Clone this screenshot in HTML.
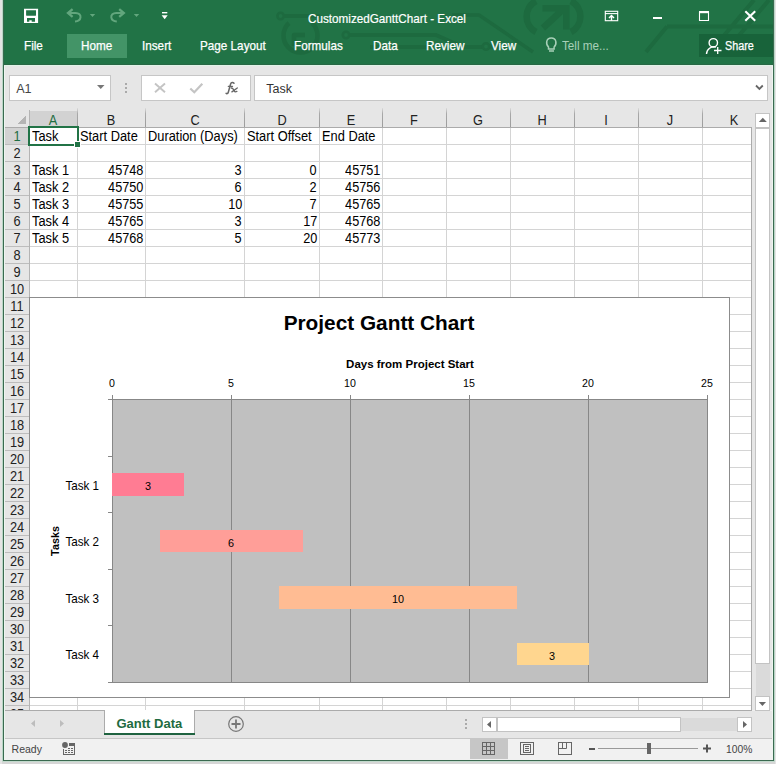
<!DOCTYPE html><html><head><meta charset="utf-8"><style>
html,body{margin:0;padding:0;}
body{width:776px;height:764px;position:relative;overflow:hidden;background:#e4e4e4;font-family:"Liberation Sans", sans-serif;}
div{box-sizing:border-box;}
svg{position:absolute;overflow:visible;}
</style></head><body>
<div style="position:absolute;left:3px;top:0px;width:771px;height:761px;background:#f0f0f0;"></div>
<div style="position:absolute;left:3px;top:0px;width:771px;height:65px;background:#217346;"></div>
<svg style="left:0;top:0" width="776" height="65" viewBox="0 0 776 65">
<g fill="none" stroke="#1d6a3f" stroke-width="4" stroke-linejoin="round">
<circle cx="280.6" cy="16" r="3.2" stroke-width="2.6"/>
<line x1="284" y1="16" x2="320" y2="16"/>
<path d="M 289 23 A 17 17 0 1 0 312 23" stroke-width="4.5"/>
<path d="M 294 46 V 35 H 305" stroke-width="4.5"/>
<circle cx="346" cy="35" r="3.2" stroke-width="2.6"/>
<path d="M 349.5 35 H 436 L 463 47 H 482"/>
<circle cx="486" cy="46.5" r="3.2" stroke-width="2.6"/>
<path d="M 489.5 46.5 H 500"/>
<path d="M 370 47 H 430"/>
<path d="M 452 15 H 479 L 533 52" stroke-width="3.5"/>
<path d="M 536 1 A 17.5 17.5 0 0 0 536 32" stroke-width="6.5"/>
<path d="M 571 1 A 17.5 17.5 0 0 1 571 32" stroke-width="6.5"/>
<path d="M 543 28 L 564 8.5 M 542.5 8.3 H 566.3 V 29.6" stroke-width="6.5" stroke-linejoin="miter"/>
<path d="M 667 26.4 H 773 M 667 26.4 L 646 52 M 754 0 L 716 45 M 769 0 L 731 45"/>
</g></svg>
<svg style="left:0;top:0" width="200" height="34" viewBox="0 0 200 34">
<path fill="#fff" fill-rule="evenodd" d="M24 8.8 H38.1 V23.1 H24 Z M26.1 10.2 V15.3 Q26.1 15.7 26.6 15.7 H35.6 Q36 15.7 36 15.3 V10.2 Z M27 18 V21.8 H29.3 V20.2 H31.7 V21.8 H35 V18 Z"/>
<g fill="none" stroke="#62a67d" stroke-width="2" stroke-linecap="butt">
<path d="M68.5 13 H75.5 C79 13 80.8 15 80.5 17.3 C80.2 19.8 78 21.3 75 21.5"/>
<path d="M72.6 9.2 L68 13 L72.6 16.8" stroke-width="2.3"/>
<g transform="translate(191.8,0) scale(-1,1)">
<path d="M68.5 13 H75.5 C79 13 80.8 15 80.5 17.3 C80.2 19.8 78 21.3 75 21.5"/>
<path d="M72.6 9.2 L68 13 L72.6 16.8" stroke-width="2.3"/>
</g></g>
<g fill="#62a67d"><path d="M89.8 14 h5.4 l-2.7 3z"/><path d="M133.8 14 h5.4 l-2.7 3z"/></g>
<g fill="#fff"><rect x="162" y="12" width="5.3" height="1.4"/><path d="M161.6 15.3 h6.1 l-3.05 4z"/></g>
</svg>
<div style="position:absolute;top:13.16px;font-size:12.8px;line-height:12.8px;color:#fff;font-weight:normal;white-space:nowrap;-webkit-text-stroke:0.2px #fff;left:308.2px;transform:scaleX(0.914);transform-origin:left center;">CustomizedGanttChart - Excel</div>
<svg style="left:0;top:0" width="776" height="34" viewBox="0 0 776 34">
<g fill="none" stroke="#fff" stroke-width="1.1">
<rect x="605.3" y="11.3" width="12.4" height="9.4"/>
<path d="M605 13.6 h13"/>
<path d="M611.5 20.8 v-5.2 M609 18 l2.5 -2.5 l2.5 2.5" stroke-width="1.4"/>
<path d="M699.5 12 v8.5 h9 v-8.5"/>
</g>
<rect x="699" y="11" width="10" height="2.2" fill="#fff"/>
<rect x="653" y="17" width="9" height="2" fill="#fff"/>
<path d="M745.3 11.3 L755.2 20.7 M755.2 11.3 L745.3 20.7" stroke="#fff" stroke-width="2.1"/>
</svg>
<div style="position:absolute;left:67px;top:34px;width:60px;height:24px;background:#439467;"></div>
<div style="position:absolute;top:40.33px;font-size:12.6px;line-height:12.6px;color:#fff;font-weight:normal;white-space:nowrap;-webkit-text-stroke:0.25px #fff;left:24.2px;transform:scaleX(0.93);transform-origin:left center;">File</div>
<div style="position:absolute;top:40.33px;font-size:12.6px;line-height:12.6px;color:#fff;font-weight:normal;white-space:nowrap;-webkit-text-stroke:0.25px #fff;left:80.5px;transform:scaleX(0.93);transform-origin:left center;">Home</div>
<div style="position:absolute;top:40.33px;font-size:12.6px;line-height:12.6px;color:#fff;font-weight:normal;white-space:nowrap;-webkit-text-stroke:0.25px #fff;left:142.2px;transform:scaleX(0.93);transform-origin:left center;">Insert</div>
<div style="position:absolute;top:40.33px;font-size:12.6px;line-height:12.6px;color:#fff;font-weight:normal;white-space:nowrap;-webkit-text-stroke:0.25px #fff;left:200.3px;transform:scaleX(0.93);transform-origin:left center;">Page Layout</div>
<div style="position:absolute;top:40.33px;font-size:12.6px;line-height:12.6px;color:#fff;font-weight:normal;white-space:nowrap;-webkit-text-stroke:0.25px #fff;left:294.2px;transform:scaleX(0.93);transform-origin:left center;">Formulas</div>
<div style="position:absolute;top:40.33px;font-size:12.6px;line-height:12.6px;color:#fff;font-weight:normal;white-space:nowrap;-webkit-text-stroke:0.25px #fff;left:372.7px;transform:scaleX(0.93);transform-origin:left center;">Data</div>
<div style="position:absolute;top:40.33px;font-size:12.6px;line-height:12.6px;color:#fff;font-weight:normal;white-space:nowrap;-webkit-text-stroke:0.25px #fff;left:425.5px;transform:scaleX(0.93);transform-origin:left center;">Review</div>
<div style="position:absolute;top:40.33px;font-size:12.6px;line-height:12.6px;color:#fff;font-weight:normal;white-space:nowrap;-webkit-text-stroke:0.25px #fff;left:491.3px;transform:scaleX(0.93);transform-origin:left center;">View</div>
<div style="position:absolute;top:40.03px;font-size:12.6px;line-height:12.6px;color:#a8d0b8;font-weight:normal;white-space:nowrap;left:562.2px;transform:scaleX(0.93);transform-origin:left center;">Tell me...</div>
<svg style="left:0;top:30" width="600" height="30" viewBox="0 30 600 30">
<g fill="none" stroke="#a8d0b8" stroke-width="1.5">
<path d="M548.5 47 c-3 -3 -2.5 -9 2.8 -9 c5.3 0 5.8 6 2.8 9 v2 h-5.6 z"/>
<path d="M549 51 h5"/>
</g></svg>
<div style="position:absolute;left:699px;top:34px;width:74px;height:23px;background:#18633a;"></div>
<div style="position:absolute;top:39.64px;font-size:12px;line-height:12px;color:#fff;font-weight:normal;white-space:nowrap;-webkit-text-stroke:0.25px #fff;left:725.3px;transform:scaleX(0.9);transform-origin:left center;">Share</div>
<svg style="left:0;top:30" width="776" height="30" viewBox="0 30 776 30">
<g fill="none" stroke="#fff" stroke-width="1.4">
<circle cx="713.3" cy="42.8" r="4.2"/>
<path d="M706.5 54 a7.5 7.5 0 0 1 9.5 -7"/>
<path d="M714 50.5 h7.5 M717.7 47 v7" stroke-width="1.3"/>
</g></svg>
<div style="position:absolute;left:4px;top:64px;width:769px;height:1px;background:#296745;"></div>
<div style="position:absolute;left:4px;top:65px;width:769px;height:1px;background:#e0f3e7;"></div>
<div style="position:absolute;left:4px;top:66px;width:769px;height:44px;background:#e6e6e6;"></div>
<div style="position:absolute;left:9px;top:75px;width:102px;height:26px;background:#fff;border:1px solid #c6c6c6;"></div>
<div style="position:absolute;top:83.13px;font-size:12.6px;line-height:12.6px;color:#444;font-weight:normal;white-space:nowrap;left:16.2px;">A1</div>
<div style="position:absolute;left:141px;top:75px;width:110px;height:26px;background:#fff;border:1px solid #c6c6c6;"></div>
<svg style="left:0;top:0" width="776" height="110" viewBox="0 0 776 110"><g fill="none" stroke="#666" stroke-linecap="round"><path d="M234 83.2 c-0.8 -1 -2.8 -1.2 -3.4 0.8 l-2.3 8.3 c-0.4 1.4 -1.6 1.8 -2.2 1" stroke-width="1.5"/><path d="M228.3 86.3 h4.2" stroke-width="1.3"/><path d="M231.2 88 c1.2 -0.2 1.8 0.6 2.3 1.6 l0.8 1.6 c0.5 0.8 1.3 0.8 2.6 0.2 M237.3 88 l-5.4 3.9" stroke-width="1.3"/></g></svg>
<div style="position:absolute;left:254px;top:75px;width:514px;height:26px;background:#fff;border:1px solid #c6c6c6;"></div>
<svg style="left:0;top:0" width="776" height="110" viewBox="0 0 776 110"><path d="M97 85 h7.5 l-3.75 4z" fill="#777"/><g fill="#aaa"><rect x="125" y="83" width="2" height="2"/><rect x="125" y="87" width="2" height="2"/><rect x="125" y="91" width="2" height="2"/></g><path d="M155 83.5 L165 92.3 M165 83.5 L155 92.3" stroke="#c4c4c4" stroke-width="1.9" fill="none"/><path d="M190.3 88.5 L194.3 92.3 L202.3 83.7" stroke="#c4c4c4" stroke-width="2.2" fill="none"/><path d="M756 85.5 l3.4 3.4 l3.4 -3.4" stroke="#666" stroke-width="1.8" fill="none"/></svg>
<div style="position:absolute;top:82.92px;font-size:12.5px;line-height:12.5px;color:#333;font-weight:normal;white-space:nowrap;left:266.3px;">Task</div>
<div style="position:absolute;left:4px;top:110px;width:769px;height:600px;background:#e6e6e6;"></div>
<div style="position:absolute;left:29px;top:128px;width:722px;height:582px;background:#fff;"></div>
<div style="position:absolute;left:4px;top:110px;width:750px;height:17px;background:#e6e6e6;"></div>
<div style="position:absolute;left:30px;top:111px;width:47px;height:16px;background:#d2d2d2;"></div>
<div style="position:absolute;left:4px;top:128px;width:25px;height:582px;background:#e6e6e6;"></div>
<div style="position:absolute;left:4px;top:128px;width:25px;height:16px;background:#d2d2d2;"></div>
<svg style="left:0;top:0" width="776" height="764" viewBox="0 0 776 764" shape-rendering="crispEdges"><defs><linearGradient id="hsep" x1="0" y1="0" x2="0" y2="1"><stop offset="0" stop-color="#dcdcdc"/><stop offset="0.3" stop-color="#a8a8a8"/><stop offset="1" stop-color="#9c9c9c"/></linearGradient></defs><rect x="77" y="128" width="1" height="582" fill="#d4d4d4"/><rect x="145" y="128" width="1" height="582" fill="#d4d4d4"/><rect x="244" y="128" width="1" height="582" fill="#d4d4d4"/><rect x="319" y="128" width="1" height="582" fill="#d4d4d4"/><rect x="382" y="128" width="1" height="582" fill="#d4d4d4"/><rect x="446" y="128" width="1" height="582" fill="#d4d4d4"/><rect x="510" y="128" width="1" height="582" fill="#d4d4d4"/><rect x="574" y="128" width="1" height="582" fill="#d4d4d4"/><rect x="638" y="128" width="1" height="582" fill="#d4d4d4"/><rect x="702" y="128" width="1" height="582" fill="#d4d4d4"/><rect x="30" y="144" width="721" height="1" fill="#d4d4d4"/><rect x="30" y="161" width="721" height="1" fill="#d4d4d4"/><rect x="30" y="178" width="721" height="1" fill="#d4d4d4"/><rect x="30" y="195" width="721" height="1" fill="#d4d4d4"/><rect x="30" y="212" width="721" height="1" fill="#d4d4d4"/><rect x="30" y="229" width="721" height="1" fill="#d4d4d4"/><rect x="30" y="246" width="721" height="1" fill="#d4d4d4"/><rect x="30" y="263" width="721" height="1" fill="#d4d4d4"/><rect x="30" y="280" width="721" height="1" fill="#d4d4d4"/><rect x="30" y="297" width="721" height="1" fill="#d4d4d4"/><rect x="30" y="314" width="721" height="1" fill="#d4d4d4"/><rect x="30" y="331" width="721" height="1" fill="#d4d4d4"/><rect x="30" y="348" width="721" height="1" fill="#d4d4d4"/><rect x="30" y="365" width="721" height="1" fill="#d4d4d4"/><rect x="30" y="382" width="721" height="1" fill="#d4d4d4"/><rect x="30" y="399" width="721" height="1" fill="#d4d4d4"/><rect x="30" y="416" width="721" height="1" fill="#d4d4d4"/><rect x="30" y="433" width="721" height="1" fill="#d4d4d4"/><rect x="30" y="450" width="721" height="1" fill="#d4d4d4"/><rect x="30" y="467" width="721" height="1" fill="#d4d4d4"/><rect x="30" y="484" width="721" height="1" fill="#d4d4d4"/><rect x="30" y="501" width="721" height="1" fill="#d4d4d4"/><rect x="30" y="518" width="721" height="1" fill="#d4d4d4"/><rect x="30" y="535" width="721" height="1" fill="#d4d4d4"/><rect x="30" y="552" width="721" height="1" fill="#d4d4d4"/><rect x="30" y="569" width="721" height="1" fill="#d4d4d4"/><rect x="30" y="586" width="721" height="1" fill="#d4d4d4"/><rect x="30" y="603" width="721" height="1" fill="#d4d4d4"/><rect x="30" y="620" width="721" height="1" fill="#d4d4d4"/><rect x="30" y="637" width="721" height="1" fill="#d4d4d4"/><rect x="30" y="654" width="721" height="1" fill="#d4d4d4"/><rect x="30" y="671" width="721" height="1" fill="#d4d4d4"/><rect x="30" y="688" width="721" height="1" fill="#d4d4d4"/><rect x="30" y="705" width="721" height="1" fill="#d4d4d4"/><rect x="77" y="108" width="1" height="19" fill="url(#hsep)"/><rect x="145" y="108" width="1" height="19" fill="url(#hsep)"/><rect x="244" y="108" width="1" height="19" fill="url(#hsep)"/><rect x="319" y="108" width="1" height="19" fill="url(#hsep)"/><rect x="382" y="108" width="1" height="19" fill="url(#hsep)"/><rect x="446" y="108" width="1" height="19" fill="url(#hsep)"/><rect x="510" y="108" width="1" height="19" fill="url(#hsep)"/><rect x="574" y="108" width="1" height="19" fill="url(#hsep)"/><rect x="638" y="108" width="1" height="19" fill="url(#hsep)"/><rect x="702" y="108" width="1" height="19" fill="url(#hsep)"/><rect x="4" y="127" width="748" height="1" fill="#ababab"/><rect x="4" y="144" width="25" height="1" fill="#bdbdbd"/><rect x="4" y="161" width="25" height="1" fill="#bdbdbd"/><rect x="4" y="178" width="25" height="1" fill="#bdbdbd"/><rect x="4" y="195" width="25" height="1" fill="#bdbdbd"/><rect x="4" y="212" width="25" height="1" fill="#bdbdbd"/><rect x="4" y="229" width="25" height="1" fill="#bdbdbd"/><rect x="4" y="246" width="25" height="1" fill="#bdbdbd"/><rect x="4" y="263" width="25" height="1" fill="#bdbdbd"/><rect x="4" y="280" width="25" height="1" fill="#bdbdbd"/><rect x="4" y="297" width="25" height="1" fill="#bdbdbd"/><rect x="4" y="314" width="25" height="1" fill="#bdbdbd"/><rect x="4" y="331" width="25" height="1" fill="#bdbdbd"/><rect x="4" y="348" width="25" height="1" fill="#bdbdbd"/><rect x="4" y="365" width="25" height="1" fill="#bdbdbd"/><rect x="4" y="382" width="25" height="1" fill="#bdbdbd"/><rect x="4" y="399" width="25" height="1" fill="#bdbdbd"/><rect x="4" y="416" width="25" height="1" fill="#bdbdbd"/><rect x="4" y="433" width="25" height="1" fill="#bdbdbd"/><rect x="4" y="450" width="25" height="1" fill="#bdbdbd"/><rect x="4" y="467" width="25" height="1" fill="#bdbdbd"/><rect x="4" y="484" width="25" height="1" fill="#bdbdbd"/><rect x="4" y="501" width="25" height="1" fill="#bdbdbd"/><rect x="4" y="518" width="25" height="1" fill="#bdbdbd"/><rect x="4" y="535" width="25" height="1" fill="#bdbdbd"/><rect x="4" y="552" width="25" height="1" fill="#bdbdbd"/><rect x="4" y="569" width="25" height="1" fill="#bdbdbd"/><rect x="4" y="586" width="25" height="1" fill="#bdbdbd"/><rect x="4" y="603" width="25" height="1" fill="#bdbdbd"/><rect x="4" y="620" width="25" height="1" fill="#bdbdbd"/><rect x="4" y="637" width="25" height="1" fill="#bdbdbd"/><rect x="4" y="654" width="25" height="1" fill="#bdbdbd"/><rect x="4" y="671" width="25" height="1" fill="#bdbdbd"/><rect x="4" y="688" width="25" height="1" fill="#bdbdbd"/><rect x="4" y="705" width="25" height="1" fill="#bdbdbd"/><rect x="29" y="110" width="1" height="600" fill="#b4b4b4"/><rect x="751" y="127" width="1" height="583" fill="#ababab"/><path d="M17 124 L26 124 L26 115 Z" fill="#b4b4b4"/></svg>
<div style="position:absolute;top:112.88px;font-size:14.2px;line-height:14.2px;color:#1f6e42;font-weight:normal;white-space:nowrap;left:-247.0px;width:600px;text-align:center;transform:scaleX(0.9);transform-origin:center center;">A</div>
<div style="position:absolute;top:112.88px;font-size:14.2px;line-height:14.2px;color:#222;font-weight:normal;white-space:nowrap;left:-189.0px;width:600px;text-align:center;transform:scaleX(0.9);transform-origin:center center;">B</div>
<div style="position:absolute;top:112.88px;font-size:14.2px;line-height:14.2px;color:#222;font-weight:normal;white-space:nowrap;left:-105.5px;width:600px;text-align:center;transform:scaleX(0.9);transform-origin:center center;">C</div>
<div style="position:absolute;top:112.88px;font-size:14.2px;line-height:14.2px;color:#222;font-weight:normal;white-space:nowrap;left:-18.5px;width:600px;text-align:center;transform:scaleX(0.9);transform-origin:center center;">D</div>
<div style="position:absolute;top:112.88px;font-size:14.2px;line-height:14.2px;color:#222;font-weight:normal;white-space:nowrap;left:50.5px;width:600px;text-align:center;transform:scaleX(0.9);transform-origin:center center;">E</div>
<div style="position:absolute;top:112.88px;font-size:14.2px;line-height:14.2px;color:#222;font-weight:normal;white-space:nowrap;left:114.0px;width:600px;text-align:center;transform:scaleX(0.9);transform-origin:center center;">F</div>
<div style="position:absolute;top:112.88px;font-size:14.2px;line-height:14.2px;color:#222;font-weight:normal;white-space:nowrap;left:178.0px;width:600px;text-align:center;transform:scaleX(0.9);transform-origin:center center;">G</div>
<div style="position:absolute;top:112.88px;font-size:14.2px;line-height:14.2px;color:#222;font-weight:normal;white-space:nowrap;left:242.0px;width:600px;text-align:center;transform:scaleX(0.9);transform-origin:center center;">H</div>
<div style="position:absolute;top:112.88px;font-size:14.2px;line-height:14.2px;color:#222;font-weight:normal;white-space:nowrap;left:306.0px;width:600px;text-align:center;transform:scaleX(0.9);transform-origin:center center;">I</div>
<div style="position:absolute;top:112.88px;font-size:14.2px;line-height:14.2px;color:#222;font-weight:normal;white-space:nowrap;left:370.0px;width:600px;text-align:center;transform:scaleX(0.9);transform-origin:center center;">J</div>
<div style="position:absolute;top:112.88px;font-size:14.2px;line-height:14.2px;color:#222;font-weight:normal;white-space:nowrap;left:434.0px;width:600px;text-align:center;transform:scaleX(0.9);transform-origin:center center;">K</div>
<div style="position:absolute;top:129.08px;font-size:14.2px;line-height:14.2px;color:#1f6e42;font-weight:normal;white-space:nowrap;left:-283.5px;width:600px;text-align:center;transform:scaleX(0.9);transform-origin:center center;">1</div>
<div style="position:absolute;top:146.08px;font-size:14.2px;line-height:14.2px;color:#222;font-weight:normal;white-space:nowrap;left:-283.5px;width:600px;text-align:center;transform:scaleX(0.9);transform-origin:center center;">2</div>
<div style="position:absolute;top:163.08px;font-size:14.2px;line-height:14.2px;color:#222;font-weight:normal;white-space:nowrap;left:-283.5px;width:600px;text-align:center;transform:scaleX(0.9);transform-origin:center center;">3</div>
<div style="position:absolute;top:180.08px;font-size:14.2px;line-height:14.2px;color:#222;font-weight:normal;white-space:nowrap;left:-283.5px;width:600px;text-align:center;transform:scaleX(0.9);transform-origin:center center;">4</div>
<div style="position:absolute;top:197.08px;font-size:14.2px;line-height:14.2px;color:#222;font-weight:normal;white-space:nowrap;left:-283.5px;width:600px;text-align:center;transform:scaleX(0.9);transform-origin:center center;">5</div>
<div style="position:absolute;top:214.08px;font-size:14.2px;line-height:14.2px;color:#222;font-weight:normal;white-space:nowrap;left:-283.5px;width:600px;text-align:center;transform:scaleX(0.9);transform-origin:center center;">6</div>
<div style="position:absolute;top:231.08px;font-size:14.2px;line-height:14.2px;color:#222;font-weight:normal;white-space:nowrap;left:-283.5px;width:600px;text-align:center;transform:scaleX(0.9);transform-origin:center center;">7</div>
<div style="position:absolute;top:248.08px;font-size:14.2px;line-height:14.2px;color:#222;font-weight:normal;white-space:nowrap;left:-283.5px;width:600px;text-align:center;transform:scaleX(0.9);transform-origin:center center;">8</div>
<div style="position:absolute;top:265.08px;font-size:14.2px;line-height:14.2px;color:#222;font-weight:normal;white-space:nowrap;left:-283.5px;width:600px;text-align:center;transform:scaleX(0.9);transform-origin:center center;">9</div>
<div style="position:absolute;top:282.08px;font-size:14.2px;line-height:14.2px;color:#222;font-weight:normal;white-space:nowrap;left:-283.5px;width:600px;text-align:center;transform:scaleX(0.9);transform-origin:center center;">10</div>
<div style="position:absolute;top:299.08px;font-size:14.2px;line-height:14.2px;color:#222;font-weight:normal;white-space:nowrap;left:-283.5px;width:600px;text-align:center;transform:scaleX(0.9);transform-origin:center center;">11</div>
<div style="position:absolute;top:316.08px;font-size:14.2px;line-height:14.2px;color:#222;font-weight:normal;white-space:nowrap;left:-283.5px;width:600px;text-align:center;transform:scaleX(0.9);transform-origin:center center;">12</div>
<div style="position:absolute;top:333.08px;font-size:14.2px;line-height:14.2px;color:#222;font-weight:normal;white-space:nowrap;left:-283.5px;width:600px;text-align:center;transform:scaleX(0.9);transform-origin:center center;">13</div>
<div style="position:absolute;top:350.08px;font-size:14.2px;line-height:14.2px;color:#222;font-weight:normal;white-space:nowrap;left:-283.5px;width:600px;text-align:center;transform:scaleX(0.9);transform-origin:center center;">14</div>
<div style="position:absolute;top:367.08px;font-size:14.2px;line-height:14.2px;color:#222;font-weight:normal;white-space:nowrap;left:-283.5px;width:600px;text-align:center;transform:scaleX(0.9);transform-origin:center center;">15</div>
<div style="position:absolute;top:384.08px;font-size:14.2px;line-height:14.2px;color:#222;font-weight:normal;white-space:nowrap;left:-283.5px;width:600px;text-align:center;transform:scaleX(0.9);transform-origin:center center;">16</div>
<div style="position:absolute;top:401.08px;font-size:14.2px;line-height:14.2px;color:#222;font-weight:normal;white-space:nowrap;left:-283.5px;width:600px;text-align:center;transform:scaleX(0.9);transform-origin:center center;">17</div>
<div style="position:absolute;top:418.08px;font-size:14.2px;line-height:14.2px;color:#222;font-weight:normal;white-space:nowrap;left:-283.5px;width:600px;text-align:center;transform:scaleX(0.9);transform-origin:center center;">18</div>
<div style="position:absolute;top:435.08px;font-size:14.2px;line-height:14.2px;color:#222;font-weight:normal;white-space:nowrap;left:-283.5px;width:600px;text-align:center;transform:scaleX(0.9);transform-origin:center center;">19</div>
<div style="position:absolute;top:452.08px;font-size:14.2px;line-height:14.2px;color:#222;font-weight:normal;white-space:nowrap;left:-283.5px;width:600px;text-align:center;transform:scaleX(0.9);transform-origin:center center;">20</div>
<div style="position:absolute;top:469.08px;font-size:14.2px;line-height:14.2px;color:#222;font-weight:normal;white-space:nowrap;left:-283.5px;width:600px;text-align:center;transform:scaleX(0.9);transform-origin:center center;">21</div>
<div style="position:absolute;top:486.08px;font-size:14.2px;line-height:14.2px;color:#222;font-weight:normal;white-space:nowrap;left:-283.5px;width:600px;text-align:center;transform:scaleX(0.9);transform-origin:center center;">22</div>
<div style="position:absolute;top:503.08px;font-size:14.2px;line-height:14.2px;color:#222;font-weight:normal;white-space:nowrap;left:-283.5px;width:600px;text-align:center;transform:scaleX(0.9);transform-origin:center center;">23</div>
<div style="position:absolute;top:520.08px;font-size:14.2px;line-height:14.2px;color:#222;font-weight:normal;white-space:nowrap;left:-283.5px;width:600px;text-align:center;transform:scaleX(0.9);transform-origin:center center;">24</div>
<div style="position:absolute;top:537.08px;font-size:14.2px;line-height:14.2px;color:#222;font-weight:normal;white-space:nowrap;left:-283.5px;width:600px;text-align:center;transform:scaleX(0.9);transform-origin:center center;">25</div>
<div style="position:absolute;top:554.08px;font-size:14.2px;line-height:14.2px;color:#222;font-weight:normal;white-space:nowrap;left:-283.5px;width:600px;text-align:center;transform:scaleX(0.9);transform-origin:center center;">26</div>
<div style="position:absolute;top:571.08px;font-size:14.2px;line-height:14.2px;color:#222;font-weight:normal;white-space:nowrap;left:-283.5px;width:600px;text-align:center;transform:scaleX(0.9);transform-origin:center center;">27</div>
<div style="position:absolute;top:588.08px;font-size:14.2px;line-height:14.2px;color:#222;font-weight:normal;white-space:nowrap;left:-283.5px;width:600px;text-align:center;transform:scaleX(0.9);transform-origin:center center;">28</div>
<div style="position:absolute;top:605.08px;font-size:14.2px;line-height:14.2px;color:#222;font-weight:normal;white-space:nowrap;left:-283.5px;width:600px;text-align:center;transform:scaleX(0.9);transform-origin:center center;">29</div>
<div style="position:absolute;top:622.08px;font-size:14.2px;line-height:14.2px;color:#222;font-weight:normal;white-space:nowrap;left:-283.5px;width:600px;text-align:center;transform:scaleX(0.9);transform-origin:center center;">30</div>
<div style="position:absolute;top:639.08px;font-size:14.2px;line-height:14.2px;color:#222;font-weight:normal;white-space:nowrap;left:-283.5px;width:600px;text-align:center;transform:scaleX(0.9);transform-origin:center center;">31</div>
<div style="position:absolute;top:656.08px;font-size:14.2px;line-height:14.2px;color:#222;font-weight:normal;white-space:nowrap;left:-283.5px;width:600px;text-align:center;transform:scaleX(0.9);transform-origin:center center;">32</div>
<div style="position:absolute;top:673.08px;font-size:14.2px;line-height:14.2px;color:#222;font-weight:normal;white-space:nowrap;left:-283.5px;width:600px;text-align:center;transform:scaleX(0.9);transform-origin:center center;">33</div>
<div style="position:absolute;top:690.08px;font-size:14.2px;line-height:14.2px;color:#222;font-weight:normal;white-space:nowrap;left:-283.5px;width:600px;text-align:center;transform:scaleX(0.9);transform-origin:center center;">34</div>
<div style="position:absolute;top:707.08px;font-size:14.2px;line-height:14.2px;color:#222;font-weight:normal;white-space:nowrap;left:-283.5px;width:600px;text-align:center;transform:scaleX(0.9);transform-origin:center center;">35</div>
<div style="position:absolute;top:129.72px;font-size:13.8px;line-height:13.8px;color:#000;font-weight:normal;white-space:nowrap;left:32px;transform:scaleX(0.93);transform-origin:left center;">Task</div>
<div style="position:absolute;top:129.72px;font-size:13.8px;line-height:13.8px;color:#000;font-weight:normal;white-space:nowrap;left:80px;transform:scaleX(0.93);transform-origin:left center;">Start Date</div>
<div style="position:absolute;top:129.72px;font-size:13.8px;line-height:13.8px;color:#000;font-weight:normal;white-space:nowrap;left:148px;transform:scaleX(0.93);transform-origin:left center;">Duration (Days)</div>
<div style="position:absolute;top:129.72px;font-size:13.8px;line-height:13.8px;color:#000;font-weight:normal;white-space:nowrap;left:247px;transform:scaleX(0.93);transform-origin:left center;">Start Offset</div>
<div style="position:absolute;top:129.72px;font-size:13.8px;line-height:13.8px;color:#000;font-weight:normal;white-space:nowrap;left:322px;transform:scaleX(0.93);transform-origin:left center;">End Date</div>
<div style="position:absolute;top:163.72px;font-size:13.8px;line-height:13.8px;color:#000;font-weight:normal;white-space:nowrap;left:32px;transform:scaleX(0.93);transform-origin:left center;">Task 1</div>
<div style="position:absolute;top:163.72px;font-size:13.8px;line-height:13.8px;color:#000;font-weight:normal;white-space:nowrap;right:633px;transform:scaleX(0.92);transform-origin:right center;">45748</div>
<div style="position:absolute;top:163.72px;font-size:13.8px;line-height:13.8px;color:#000;font-weight:normal;white-space:nowrap;right:534px;transform:scaleX(0.92);transform-origin:right center;">3</div>
<div style="position:absolute;top:163.72px;font-size:13.8px;line-height:13.8px;color:#000;font-weight:normal;white-space:nowrap;right:459px;transform:scaleX(0.92);transform-origin:right center;">0</div>
<div style="position:absolute;top:163.72px;font-size:13.8px;line-height:13.8px;color:#000;font-weight:normal;white-space:nowrap;right:396px;transform:scaleX(0.92);transform-origin:right center;">45751</div>
<div style="position:absolute;top:180.72px;font-size:13.8px;line-height:13.8px;color:#000;font-weight:normal;white-space:nowrap;left:32px;transform:scaleX(0.93);transform-origin:left center;">Task 2</div>
<div style="position:absolute;top:180.72px;font-size:13.8px;line-height:13.8px;color:#000;font-weight:normal;white-space:nowrap;right:633px;transform:scaleX(0.92);transform-origin:right center;">45750</div>
<div style="position:absolute;top:180.72px;font-size:13.8px;line-height:13.8px;color:#000;font-weight:normal;white-space:nowrap;right:534px;transform:scaleX(0.92);transform-origin:right center;">6</div>
<div style="position:absolute;top:180.72px;font-size:13.8px;line-height:13.8px;color:#000;font-weight:normal;white-space:nowrap;right:459px;transform:scaleX(0.92);transform-origin:right center;">2</div>
<div style="position:absolute;top:180.72px;font-size:13.8px;line-height:13.8px;color:#000;font-weight:normal;white-space:nowrap;right:396px;transform:scaleX(0.92);transform-origin:right center;">45756</div>
<div style="position:absolute;top:197.72px;font-size:13.8px;line-height:13.8px;color:#000;font-weight:normal;white-space:nowrap;left:32px;transform:scaleX(0.93);transform-origin:left center;">Task 3</div>
<div style="position:absolute;top:197.72px;font-size:13.8px;line-height:13.8px;color:#000;font-weight:normal;white-space:nowrap;right:633px;transform:scaleX(0.92);transform-origin:right center;">45755</div>
<div style="position:absolute;top:197.72px;font-size:13.8px;line-height:13.8px;color:#000;font-weight:normal;white-space:nowrap;right:534px;transform:scaleX(0.92);transform-origin:right center;">10</div>
<div style="position:absolute;top:197.72px;font-size:13.8px;line-height:13.8px;color:#000;font-weight:normal;white-space:nowrap;right:459px;transform:scaleX(0.92);transform-origin:right center;">7</div>
<div style="position:absolute;top:197.72px;font-size:13.8px;line-height:13.8px;color:#000;font-weight:normal;white-space:nowrap;right:396px;transform:scaleX(0.92);transform-origin:right center;">45765</div>
<div style="position:absolute;top:214.72px;font-size:13.8px;line-height:13.8px;color:#000;font-weight:normal;white-space:nowrap;left:32px;transform:scaleX(0.93);transform-origin:left center;">Task 4</div>
<div style="position:absolute;top:214.72px;font-size:13.8px;line-height:13.8px;color:#000;font-weight:normal;white-space:nowrap;right:633px;transform:scaleX(0.92);transform-origin:right center;">45765</div>
<div style="position:absolute;top:214.72px;font-size:13.8px;line-height:13.8px;color:#000;font-weight:normal;white-space:nowrap;right:534px;transform:scaleX(0.92);transform-origin:right center;">3</div>
<div style="position:absolute;top:214.72px;font-size:13.8px;line-height:13.8px;color:#000;font-weight:normal;white-space:nowrap;right:459px;transform:scaleX(0.92);transform-origin:right center;">17</div>
<div style="position:absolute;top:214.72px;font-size:13.8px;line-height:13.8px;color:#000;font-weight:normal;white-space:nowrap;right:396px;transform:scaleX(0.92);transform-origin:right center;">45768</div>
<div style="position:absolute;top:231.72px;font-size:13.8px;line-height:13.8px;color:#000;font-weight:normal;white-space:nowrap;left:32px;transform:scaleX(0.93);transform-origin:left center;">Task 5</div>
<div style="position:absolute;top:231.72px;font-size:13.8px;line-height:13.8px;color:#000;font-weight:normal;white-space:nowrap;right:633px;transform:scaleX(0.92);transform-origin:right center;">45768</div>
<div style="position:absolute;top:231.72px;font-size:13.8px;line-height:13.8px;color:#000;font-weight:normal;white-space:nowrap;right:534px;transform:scaleX(0.92);transform-origin:right center;">5</div>
<div style="position:absolute;top:231.72px;font-size:13.8px;line-height:13.8px;color:#000;font-weight:normal;white-space:nowrap;right:459px;transform:scaleX(0.92);transform-origin:right center;">20</div>
<div style="position:absolute;top:231.72px;font-size:13.8px;line-height:13.8px;color:#000;font-weight:normal;white-space:nowrap;right:396px;transform:scaleX(0.92);transform-origin:right center;">45773</div>
<div style="position:absolute;left:28px;top:126px;width:51px;height:20px;background:transparent;border:2px solid #217346;"></div>
<div style="position:absolute;left:74px;top:141px;width:7px;height:7px;background:#fff;"></div>
<div style="position:absolute;left:75px;top:142px;width:5px;height:5px;background:#217346;"></div>
<div style="position:absolute;left:29px;top:297px;width:701px;height:401px;background:#fff;border:1px solid #8c8c8c;"></div>
<div style="position:absolute;top:312.89px;font-size:20.8px;line-height:20.8px;color:#000;font-weight:bold;white-space:nowrap;left:79px;width:600px;text-align:center;">Project Gantt Chart</div>
<div style="position:absolute;top:358.97px;font-size:11.5px;line-height:11.5px;color:#000;font-weight:bold;white-space:nowrap;left:110px;width:600px;text-align:center;">Days from Project Start</div>
<svg style="left:0;top:0" width="776" height="764" viewBox="0 0 776 764" shape-rendering="crispEdges"><rect x="112" y="399" width="596" height="284" fill="#c0c0c0"/><rect x="112" y="395" width="1" height="288" fill="#878787"/><rect x="231" y="395" width="1" height="288" fill="#878787"/><rect x="350" y="395" width="1" height="288" fill="#878787"/><rect x="469" y="395" width="1" height="288" fill="#878787"/><rect x="588" y="395" width="1" height="288" fill="#878787"/><rect x="707" y="395" width="1" height="288" fill="#878787"/><rect x="108" y="399" width="600" height="1" fill="#878787"/><rect x="112" y="682" width="596" height="1" fill="#878787"/><rect x="108" y="399" width="4" height="1" fill="#878787"/><rect x="108" y="456" width="4" height="1" fill="#878787"/><rect x="108" y="512" width="4" height="1" fill="#878787"/><rect x="108" y="569" width="4" height="1" fill="#878787"/><rect x="108" y="625" width="4" height="1" fill="#878787"/><rect x="108" y="682" width="4" height="1" fill="#878787"/><rect x="112" y="473" width="72" height="23" fill="#ff7c93"/><rect x="160" y="530" width="143" height="22" fill="#ff9e98"/><rect x="279" y="586" width="238" height="23" fill="#ffbc93"/><rect x="517" y="643" width="72" height="22" fill="#ffd68f"/></svg>
<div style="position:absolute;top:377.51px;font-size:11.8px;line-height:11.8px;color:#000;font-weight:normal;white-space:nowrap;left:-187.6px;width:600px;text-align:center;transform:scaleX(0.9);transform-origin:center center;">0</div>
<div style="position:absolute;top:377.51px;font-size:11.8px;line-height:11.8px;color:#000;font-weight:normal;white-space:nowrap;left:-68.6px;width:600px;text-align:center;transform:scaleX(0.9);transform-origin:center center;">5</div>
<div style="position:absolute;top:377.51px;font-size:11.8px;line-height:11.8px;color:#000;font-weight:normal;white-space:nowrap;left:50.39999999999998px;width:600px;text-align:center;transform:scaleX(0.9);transform-origin:center center;">10</div>
<div style="position:absolute;top:377.51px;font-size:11.8px;line-height:11.8px;color:#000;font-weight:normal;white-space:nowrap;left:169.39999999999998px;width:600px;text-align:center;transform:scaleX(0.9);transform-origin:center center;">15</div>
<div style="position:absolute;top:377.51px;font-size:11.8px;line-height:11.8px;color:#000;font-weight:normal;white-space:nowrap;left:288.4px;width:600px;text-align:center;transform:scaleX(0.9);transform-origin:center center;">20</div>
<div style="position:absolute;top:377.51px;font-size:11.8px;line-height:11.8px;color:#000;font-weight:normal;white-space:nowrap;left:407.4px;width:600px;text-align:center;transform:scaleX(0.9);transform-origin:center center;">25</div>
<div style="position:absolute;top:480.91px;font-size:11.8px;line-height:11.8px;color:#000;font-weight:normal;white-space:nowrap;left:-152.3px;width:600px;text-align:center;transform:scaleX(0.92);transform-origin:center center;">3</div>
<div style="position:absolute;top:479.62px;font-size:12.15px;line-height:12.15px;color:#000;font-weight:normal;white-space:nowrap;right:677px;transform:scaleX(0.96);transform-origin:right center;">Task 1</div>
<div style="position:absolute;top:537.51px;font-size:11.8px;line-height:11.8px;color:#000;font-weight:normal;white-space:nowrap;left:-69.0px;width:600px;text-align:center;transform:scaleX(0.92);transform-origin:center center;">6</div>
<div style="position:absolute;top:536.22px;font-size:12.15px;line-height:12.15px;color:#000;font-weight:normal;white-space:nowrap;right:677px;transform:scaleX(0.96);transform-origin:right center;">Task 2</div>
<div style="position:absolute;top:594.11px;font-size:11.8px;line-height:11.8px;color:#000;font-weight:normal;white-space:nowrap;left:97.60000000000002px;width:600px;text-align:center;transform:scaleX(0.92);transform-origin:center center;">10</div>
<div style="position:absolute;top:592.82px;font-size:12.15px;line-height:12.15px;color:#000;font-weight:normal;white-space:nowrap;right:677px;transform:scaleX(0.96);transform-origin:right center;">Task 3</div>
<div style="position:absolute;top:650.71px;font-size:11.8px;line-height:11.8px;color:#000;font-weight:normal;white-space:nowrap;left:252.29999999999995px;width:600px;text-align:center;transform:scaleX(0.92);transform-origin:center center;">3</div>
<div style="position:absolute;top:649.42px;font-size:12.15px;line-height:12.15px;color:#000;font-weight:normal;white-space:nowrap;right:677px;transform:scaleX(0.96);transform-origin:right center;">Task 4</div>
<div style="position:absolute;left:55px;top:541px;width:0;height:0;"><div style="position:absolute;left:-50px;top:-7px;width:100px;text-align:center;transform:rotate(-90deg);font-size:10.8px;line-height:14px;font-weight:bold;">Tasks</div></div>
<div style="position:absolute;left:755px;top:113px;width:15px;height:15px;background:#fff;border:1px solid #c3c3c3;"></div>
<div style="position:absolute;left:755px;top:128px;width:15px;height:536px;background:#fff;border:1px solid #c3c3c3;"></div>
<div style="position:absolute;left:756px;top:664px;width:14px;height:32px;background:#dadada;"></div>
<div style="position:absolute;left:755px;top:696px;width:15px;height:15px;background:#fff;border:1px solid #c3c3c3;"></div>
<svg style="left:0;top:0" width="776" height="764" viewBox="0 0 776 764"><path d="M758.8 122 h8 l-4 -4.3z" fill="#666"/><path d="M758.8 702 h7.2 l-3.6 4z" fill="#666"/></svg>
<div style="position:absolute;left:4px;top:711px;width:769px;height:27px;background:#e6e6e6;"></div>
<div style="position:absolute;left:4px;top:710px;width:748px;height:1px;background:#ababab;"></div>
<div style="position:absolute;left:104px;top:710px;width:91px;height:25px;background:#fff;border-left:1px solid #ababab;border-right:1px solid #ababab;"></div>
<div style="position:absolute;left:104px;top:733px;width:91px;height:2px;background:#1f6340;"></div>
<div style="position:absolute;top:716.90px;font-size:13px;line-height:13px;color:#1e6b40;font-weight:bold;white-space:nowrap;left:116.5px;">Gantt Data</div>
<svg style="left:0;top:0" width="776" height="764" viewBox="0 0 776 764"><path d="M35 720 v7 l-4 -3.5z" fill="#bdbdbd"/><path d="M60 720 v7 l4 -3.5z" fill="#bdbdbd"/><circle cx="236" cy="724" r="7.3" fill="none" stroke="#777" stroke-width="1.2"/><path d="M231.5 724 h9 M236 719.5 v9" stroke="#777" stroke-width="1.8"/><g fill="#aaa"><rect x="465" y="719" width="2" height="2"/><rect x="465" y="723" width="2" height="2"/><rect x="465" y="727" width="2" height="2"/></g></svg>
<div style="position:absolute;left:482px;top:717px;width:15px;height:15px;background:#fff;border:1px solid #c3c3c3;"></div>
<div style="position:absolute;left:497px;top:717px;width:184px;height:15px;background:#fff;border:1px solid #c3c3c3;"></div>
<div style="position:absolute;left:681px;top:718px;width:56px;height:13px;background:#dadada;"></div>
<div style="position:absolute;left:737px;top:717px;width:15px;height:15px;background:#fff;border:1px solid #c3c3c3;"></div>
<svg style="left:0;top:0" width="776" height="764" viewBox="0 0 776 764"><path d="M491 721 v7 l-4 -3.5z" fill="#666"/><path d="M743 721 v7 l4 -3.5z" fill="#666"/></svg>
<div style="position:absolute;left:4px;top:738px;width:769px;height:1px;background:#c6c6c6;"></div>
<div style="position:absolute;left:4px;top:739px;width:769px;height:21px;background:#f1f1f1;"></div>
<div style="position:absolute;top:744.21px;font-size:10.5px;line-height:10.5px;color:#444;font-weight:normal;white-space:nowrap;left:11.6px;">Ready</div>
<div style="position:absolute;left:470px;top:739px;width:38px;height:20px;background:#c6c6c6;"></div>
<svg style="left:0;top:0" width="776" height="764" viewBox="0 0 776 764"><g fill="#666" shape-rendering="crispEdges"><rect x="69" y="743" width="6" height="2.5"/><rect x="74" y="743" width="1" height="12"/><rect x="63" y="754" width="12" height="1"/><rect x="63" y="749" width="1" height="6"/><rect x="68" y="748" width="2" height="1"/><rect x="71" y="748" width="2" height="1"/><rect x="65" y="750" width="2" height="1"/><rect x="68" y="750" width="2" height="1"/><rect x="71" y="750" width="2" height="1"/><rect x="65" y="752" width="2" height="1"/><rect x="68" y="752" width="2" height="1"/><rect x="71" y="752" width="2" height="1"/></g><circle cx="65" cy="745" r="2.9" fill="#666"/><g fill="none" stroke="#666" stroke-width="1"><rect x="482.5" y="742.5" width="12" height="12"/><path d="M486.5 742 v13 M490.5 742 v13 M482 746.5 h13 M482 750.5 h13"/><rect x="520.5" y="742.5" width="13" height="12"/><rect x="523.5" y="744.5" width="7" height="8"/><path d="M525 746.5 h4 M525 748.5 h4 M525 750.5 h4"/><rect x="558.5" y="742.5" width="13" height="12"/><path d="M562.5 742.5 v6 M566.5 742.5 v6 M558.5 748.5 h8"/></g><rect x="589" y="748" width="6" height="2" fill="#555"/><rect x="598" y="748" width="100" height="1" fill="#999"/><rect x="647" y="743" width="4" height="11" fill="#666"/><path d="M703 748.5 h8 M707 744.5 v8" stroke="#555" stroke-width="2"/></svg>
<div style="position:absolute;top:745.08px;font-size:10.3px;line-height:10.3px;color:#444;font-weight:normal;white-space:nowrap;right:23.600000000000023px;">100%</div>
<div style="position:absolute;left:2px;top:0px;width:1px;height:762px;background:#b9d6c6;"></div>
<div style="position:absolute;left:774px;top:0px;width:1px;height:762px;background:#b9d6c6;"></div>
<div style="position:absolute;left:2px;top:761px;width:773px;height:1px;background:#c2d9cc;"></div>
<div style="position:absolute;left:2px;top:762px;width:773px;height:2px;background:#d6d6d6;"></div>
<div style="position:absolute;left:4px;top:66px;width:1px;height:694px;background:#eef5f0;"></div>
<div style="position:absolute;left:772px;top:66px;width:1px;height:694px;background:#eef5f0;"></div>
<div style="position:absolute;left:3px;top:0px;width:1px;height:761px;background:#3a6a50;"></div>
<div style="position:absolute;left:773px;top:0px;width:1px;height:761px;background:#3a6a50;"></div>
<div style="position:absolute;left:3px;top:760px;width:771px;height:1px;background:#3a6a50;"></div>
</body></html>
